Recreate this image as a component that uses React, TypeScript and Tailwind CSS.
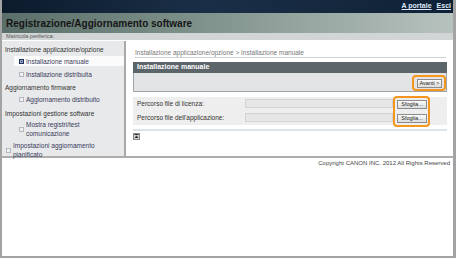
import React from "react";

function Bullet({ active = false }: { active?: boolean }) {
  return active ? (
    <span className="inline-block h-[5px] w-[5px] shrink-0 border border-[#23325a] bg-[#3b4f86] shadow-[inset_0_0_0_1px_#8fa0c8]" />
  ) : (
    <span className="inline-block h-[5px] w-[5px] shrink-0 border border-[#b3b9c0] bg-[#eef0f2]" />
  );
}

function SmallButton({ label, className = "" }: { label: string; className?: string }) {
  return (
    <div
      className={`flex h-[9px] items-center justify-center border border-[#8c8c8c] bg-[linear-gradient(#fbfbfb,#dcdcdc)] text-[5.5px] leading-none text-[#222] ${className}`}
    >
      {label}
    </div>
  );
}

export default function App() {
  return (
    <div className="h-[259px] w-[456px] bg-white font-['Liberation_Sans',Arial,sans-serif]">
      <div className="flex h-[258px] flex-col border-x-2 border-r-[3px] border-b-2 border-[#a3a3a3]">
        {/* top strip */}
        <div className="flex h-[13px] items-center justify-end gap-[5px] bg-[linear-gradient(to_right,#0c1b2c,#1a2f47_45%,#0f2136)] pr-[2px] text-[7px] font-bold text-[#dfe9f7]">
          <span className="underline">A portale</span>
          <span className="underline">Esci</span>
        </div>

        {/* title band */}
        <div className="flex h-[20px] items-center bg-[linear-gradient(to_right,#5b6f6a,#7b8e88_40%,#b7c2be)] pl-[4px]">
          <span className="text-[10px] font-bold text-[#151515]">
            Registrazione/Aggiornamento software
          </span>
        </div>

        <div className="flex h-[8px] items-center border-b border-white bg-[#d2d5d5] pl-[4px] text-[5.5px] text-[#555]">
          Matricola periferica:
        </div>

        {/* body */}
        <div className="flex h-[117px] border-b-2 border-[#adadad]">
          <div className="w-[124px] shrink-0 border-r-2 border-[#a9a9a9] bg-[#e7e9ea] pl-[3px] pt-[4px] text-[6.5px] leading-[9px]">
            <div className="text-[#333]">Installazione applicazione/opzione</div>
            <div className="ml-[9px] mt-[2px] flex h-[10px] items-center gap-[2px] bg-[#fbfbfb] pl-[5px] text-[#3b3b5c]">
              <Bullet active />
              <span>Installazione manuale</span>
            </div>
            <div className="ml-[9px] mt-[3px] flex h-[10px] items-center gap-[2px] pl-[5px] text-[#3b3b5c]">
              <Bullet />
              <span>Installazione distribuita</span>
            </div>
            <div className="mt-[4px] text-[#333]">Aggiornamento firmware</div>
            <div className="ml-[9px] mt-[2px] flex h-[10px] items-center gap-[2px] pl-[5px] text-[#3b3b5c]">
              <Bullet />
              <span>Aggiornamento distribuito</span>
            </div>
            <div className="mt-[5px] text-[#333]">Impostazioni gestione software</div>
            <div className="ml-[9px] mt-[2px] flex items-center gap-[2px] pl-[5px] text-[#3b3b5c]">
              <Bullet />
              <span>
                Mostra registri/test
                <br />
                comunicazione
              </span>
            </div>
            <div className="mt-[4px] flex items-center gap-[2px] pl-[1px] leading-[8.5px] text-[#3b3b5c]">
              <Bullet />
              <span>
                Impostazioni aggiornamento
                <br />
                pianificato
              </span>
            </div>
          </div>

          {/* content */}
          <div className="flex-1 pl-[7px] pr-[6px] pt-[8px]">
            <div className="ml-[2px] mr-[1px] border-b border-[#d0d0d0] text-[6.5px] leading-[8px] text-[#777]">
              Installazione applicazione/opzione &gt; Installazione manuale
            </div>

            <div className="mt-[4px] flex h-[11px] items-center bg-[#5c6569] pl-[4px] text-[7px] font-bold text-white">
              Installazione manuale
            </div>
            <div className="relative flex h-[19px] justify-end border-x border-b border-[#9fa5a8] bg-[#e2e4e5] pr-[4px] pt-[6px]">
              <SmallButton label="Avanti >" className="w-[25px]" />
              <div className="absolute left-[278px] top-[2px] h-[16px] w-[34px] rounded-[4px] border-2 border-[#f5961f]" />
            </div>

            <div className="relative mt-[5px] flex h-[28px] flex-col gap-[4px] bg-[#eeeeee] pl-[4px] pt-[2px] text-[6.5px] text-[#333]">
              <div className="flex h-[10px] items-start">
                <span className="w-[108px] leading-[10px]">Percorso file di licenza:</span>
                <div className="h-[9px] w-[148px] border border-[#d2d2d2] bg-[#e6e6e6]" />
                <SmallButton label="Sfoglia..." className="ml-[4px] mt-[1px] w-[30px]" />
              </div>
              <div className="flex h-[10px] items-start">
                <span className="w-[108px] leading-[10px]">Percorso file dell'applicazione:</span>
                <div className="h-[9px] w-[148px] border border-[#d2d2d2] bg-[#e6e6e6]" />
                <SmallButton label="Sfoglia..." className="ml-[4px] mt-[1px] w-[30px]" />
              </div>
              <div className="absolute left-[260px] top-[-1px] h-[31px] w-[37px] rounded-[4px] border-2 border-[#f5961f]" />
            </div>

            <div className="mt-[4px] h-[2px] bg-[#dde3ea]" />
            <div className="mt-[2px] flex h-[7px] w-[7px] items-center justify-center border border-[#8a8a8a] bg-[#cfcfcf]">
              <svg width="5" height="5" viewBox="0 0 5 5">
                <rect x="0.5" y="0" width="4" height="1" fill="#333" />
                <path d="M2.5 1.5 L4.5 4 L0.5 4 Z" fill="#333" />
              </svg>
            </div>
          </div>
        </div>

        <div className="pr-[3px] pt-[1px] text-right text-[6px] leading-[8px] text-[#444]">
          Copyright CANON INC. 2012 All Rights Reserved
        </div>
      </div>
    </div>
  );
}
